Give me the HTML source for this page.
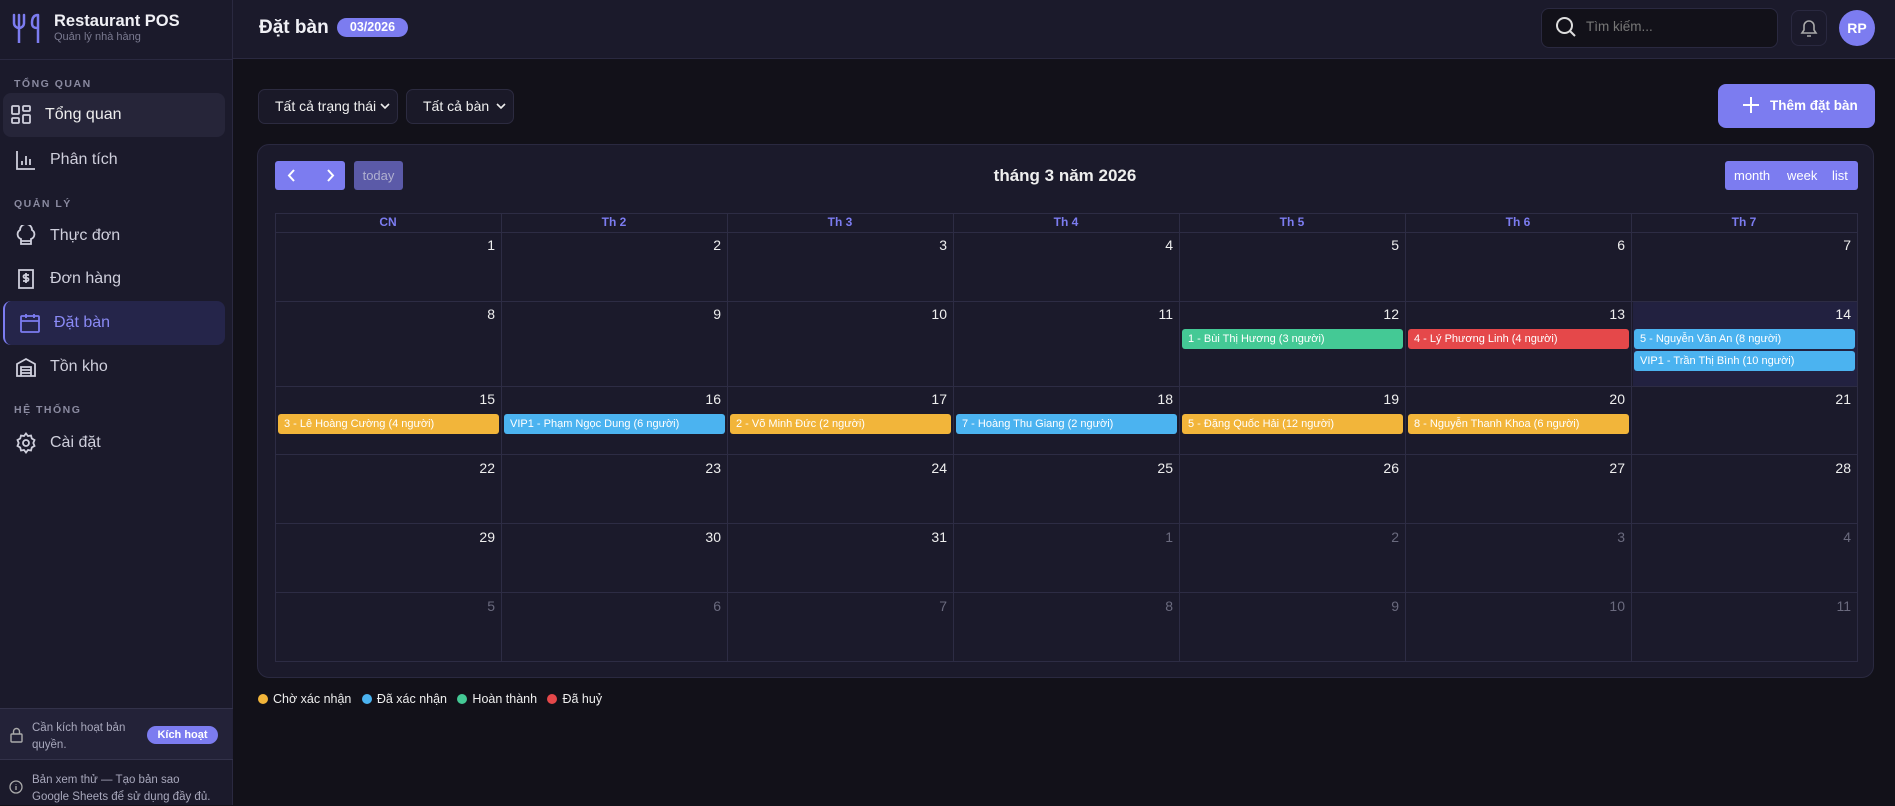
<!DOCTYPE html>
<html><head><meta charset="utf-8"><style>
*{box-sizing:border-box;margin:0;padding:0}
body{width:1895px;height:805px;overflow:hidden;background:#121119;font-family:"Liberation Sans","Noto Sans CJK SC",sans-serif;color:#e8e8f0;position:relative}
.a{position:absolute}
.side{left:0;top:0;width:233px;height:805px;background:#1b1a2b;border-right:1px solid #2a2940}
.nav{left:8px;width:217px;height:44px;border-radius:8px;display:flex;align-items:center;padding-left:42px;font-size:16px;color:#cfcfdc}
.nav svg{position:absolute;left:7px;top:11px}
.lbl{left:14px;font-size:10.5px;letter-spacing:1.5px;color:#8a8aa0;font-weight:bold}
.hdr{left:233px;top:0;width:1662px;height:59px;background:#1b1a2b;border-bottom:1px solid #2a2940}
.sel{top:89px;height:35px;border:1px solid #2c2b40;border-radius:7px;background:#1a1928;font-size:14px;color:#eee;padding:0 0 0 16px;line-height:33px}
.card{left:257px;top:144px;width:1617px;height:534px;background:#1b1a2b;border:1px solid #2a2940;border-radius:12px}
.col{top:213px;height:448px;width:1px;background:#2d2c44}
.row{left:275px;width:1583px;height:1px;background:#2d2c44}
.dh{top:213px;height:19px;width:226px;text-align:center;font-size:12px;font-weight:bold;color:#7c7cf0;line-height:19px}
.dn{width:226px;text-align:right;padding-right:6px;font-size:14px;color:#eee}
.dn.o{color:#6a6a7e}
.ev{height:20px;border-radius:3px;font-size:11px;color:#fff;line-height:20px;padding-left:6px;white-space:nowrap;overflow:hidden}
.y{background:#f2b53a}.b{background:#4bb3f0}.g{background:#44c995}.r{background:#e5484a}
.dot{display:inline-block;width:10px;height:10px;border-radius:50%;margin-right:5px;vertical-align:-1px}
</style></head><body>
<div class="a side"></div>
<svg class="a" style="left:12px;top:13px" width="30" height="30" viewBox="0 0 30 30" fill="none" stroke="#7c7cf0" stroke-width="2.5" stroke-linecap="round"><path d="M2 2v8a5 5 0 0 0 10 0V2M7 2v28M26 2c-5 0-6 4-6 8s2 5 6 5M26 2v28"/></svg>
<div class="a" style="left:54px;top:12px;font-size:16.5px;font-weight:bold;color:#f0f0f5">Restaurant POS</div>
<div class="a" style="left:54px;top:31px;font-size:11px;color:#7a7a90">Quản lý nhà hàng</div>
<div class="a" style="left:0;top:59px;width:233px;height:1px;background:#2a2940"></div>
<div class="a lbl" style="top:78px">TỔNG QUAN</div>
<div class="a nav" style="top:93px;background:#262539;left:3px;width:222px;color:#eee"><svg width="22" height="22" viewBox="0 0 22 22" fill="none" stroke="#cfcfdc" stroke-width="1.8"><rect x="2" y="2" width="7" height="8" rx="1"/><rect x="13" y="2" width="7" height="5" rx="1"/><rect x="2" y="14" width="7" height="5" rx="1"/><rect x="13" y="11" width="7" height="8" rx="1"/></svg>Tổng quan</div>
<div class="a nav" style="top:138px"><svg width="22" height="22" viewBox="0 0 22 22" fill="none" stroke="#cfcfdc" stroke-width="1.8"><path d="M2 2v18h18M7 16v-4M11 16V7M15 16v-6"/></svg>Phân tích</div>
<div class="a lbl" style="top:198px">QUẢN LÝ</div>
<div class="a nav" style="top:214px"><svg width="22" height="22" viewBox="0 0 22 22" fill="none" stroke="#cfcfdc" stroke-width="1.8"><path d="M6 14a5 5 0 0 1-1-9 6 6 0 0 1 12 0 5 5 0 0 1-1 9v5H6zM6 16h10"/></svg>Thực đơn</div>
<div class="a nav" style="top:257px"><svg width="22" height="22" viewBox="0 0 22 22" fill="none" stroke="#cfcfdc" stroke-width="1.8"><path d="M4 2h14v18H4zM14 7h-4a1.5 1.5 0 0 0 0 3h2a1.5 1.5 0 0 1 0 3H8M11 5v10"/></svg>Đơn hàng</div>
<div class="a nav" style="top:301px;background:#25254a;left:3px;width:222px;border-left:2px solid #7c7cf0;color:#8a8af5;padding-left:49px"><svg style="left:14px" width="22" height="22" viewBox="0 0 22 22" fill="none" stroke="#7c7cf0" stroke-width="1.8"><rect x="2" y="4" width="18" height="16" rx="1"/><path d="M2 9h18M7 2v4M15 2v4"/></svg>Đặt bàn</div>
<div class="a nav" style="top:345px"><svg width="22" height="22" viewBox="0 0 22 22" fill="none" stroke="#cfcfdc" stroke-width="1.8"><path d="M2 20V8l9-5 9 5v12zM6 20v-9h10v9M6 14h10M6 17h10"/></svg>Tồn kho</div>
<div class="a lbl" style="top:404px">HỆ THỐNG</div>
<div class="a nav" style="top:421px"><svg width="22" height="22" viewBox="0 0 22 22" fill="none" stroke="#cfcfdc" stroke-width="1.8"><circle cx="11" cy="11" r="3"/><path d="M11 1.5l2 2.5 3-.5.8 3 2.7 1.5-1.2 3 1.2 3-2.7 1.5-.8 3-3-.5-2 2.5-2-2.5-3 .5-.8-3-2.7-1.5 1.2-3-1.2-3 2.7-1.5.8-3 3 .5z"/></svg>Cài đặt</div>
<div class="a" style="left:0;top:708px;width:233px;height:52px;background:#232238;border-top:1px solid #33324a;border-bottom:1px solid #33324a"></div>
<svg class="a" style="left:10px;top:727px" width="13" height="16" viewBox="0 0 13 16" fill="none" stroke="#aaa" stroke-width="1.4"><rect x="1" y="7" width="11" height="8" rx="1"/><path d="M3.5 7V4.5a3 3 0 0 1 6 0V7"/></svg>
<div class="a" style="left:32px;top:720px;font-size:11.5px;line-height:17px;color:#a8a8bc">Cần kích hoạt bản<br>quyền.</div>
<div class="a" style="left:147px;top:726px;width:71px;height:18px;border-radius:9px;background:#7c7cf0;font-size:11px;font-weight:bold;color:#fff;text-align:center;line-height:18px">Kích hoạt</div>
<svg class="a" style="left:9px;top:780px" width="14" height="14" viewBox="0 0 14 14" fill="none" stroke="#aaa" stroke-width="1.3"><circle cx="7" cy="7" r="6"/><path d="M7 6v4M7 4v.5"/></svg>
<div class="a" style="left:32px;top:772px;font-size:11.5px;line-height:17px;color:#a8a8bc">Bản xem thử — Tạo bản sao<br>Google Sheets để sử dụng đầy đủ.</div>

<div class="a hdr"></div>
<div class="a" style="left:259px;top:17px;font-size:19px;font-weight:bold;color:#f0f0f5">Đặt bàn</div>
<div class="a" style="left:337px;top:18px;width:71px;height:19px;border-radius:10px;background:#7c7cf0;font-size:12.5px;font-weight:bold;color:#fff;text-align:center;line-height:19px">03/2026</div>
<div class="a" style="left:1541px;top:8px;width:237px;height:40px;border-radius:8px;background:#121119;border:1px solid #2a2940"></div>
<svg class="a" style="left:1555px;top:16px" width="22" height="22" viewBox="0 0 22 22" fill="none" stroke="#ddd" stroke-width="2"><circle cx="9.5" cy="9.5" r="7.5"/><path d="M15 15l5 5"/></svg>
<div class="a" style="left:1586px;top:19px;font-size:13.5px;color:#777">Tìm kiếm...</div>
<div class="a" style="left:1791px;top:10px;width:36px;height:36px;border-radius:8px;border:1px solid #2a2940"></div>
<svg class="a" style="left:1798px;top:17px" width="22" height="22" viewBox="0 0 22 22" fill="none" stroke="#aaa" stroke-width="1.6"><path d="M4 16h14l-2-3V9a5 5 0 0 0-10 0v4zM9 19h4"/></svg>
<div class="a" style="left:1839px;top:10px;width:36px;height:36px;border-radius:50%;background:#7c7cf0;font-size:14px;font-weight:bold;color:#fff;text-align:center;line-height:36px">RP</div>

<div class="a sel" style="left:258px;width:140px">Tất cả trạng thái<svg style="position:absolute;right:7px;top:13px" width="10" height="7" viewBox="0 0 10 7" fill="none" stroke="#eee" stroke-width="1.6"><path d="M1 1l4 4 4-4"/></svg></div>
<div class="a sel" style="left:406px;width:108px">Tất cả bàn<svg style="position:absolute;right:7px;top:13px" width="10" height="7" viewBox="0 0 10 7" fill="none" stroke="#eee" stroke-width="1.6"><path d="M1 1l4 4 4-4"/></svg></div>
<div class="a" style="left:1718px;top:84px;width:157px;height:44px;border-radius:8px;background:#7c7cf0"></div>
<svg class="a" style="left:1742px;top:96px" width="18" height="18" viewBox="0 0 18 18" stroke="#fff" stroke-width="2"><path d="M9 1v16M1 9h16"/></svg>
<div class="a" style="left:1770px;top:98px;font-size:13.5px;font-weight:bold;color:#fff">Thêm đặt bàn</div>

<div class="a card"></div>
<div class="a" style="left:275px;top:161px;width:70px;height:29px;border-radius:3px;background:#7c7cf0"></div>
<svg class="a" style="left:286px;top:168px" width="50" height="15" viewBox="0 0 50 15" fill="none" stroke="#fff" stroke-width="2"><path d="M8 2l-5 5.5 5 5.5M42 2l5 5.5-5 5.5"/></svg>
<div class="a" style="left:354px;top:161px;width:49px;height:29px;border-radius:3px;background:#5b5aa8;font-size:13px;color:#b0b0d0;text-align:center;line-height:29px">today</div>
<div class="a" style="left:0;width:2130px;top:166px;text-align:center;font-size:17px;font-weight:bold;color:#eee">tháng 3 năm 2026</div>
<div class="a" style="left:1725px;top:161px;width:133px;height:29px;border-radius:3px;background:#7c7cf0;font-size:13px;color:#fff;line-height:29px"><span style="position:absolute;left:9px">month</span><span style="position:absolute;left:62px">week</span><span style="position:absolute;left:107px">list</span></div>

<div class="a" style="left:1633px;top:301px;width:224px;height:85px;background:#222140"></div>
<div class="a row" style="top:213px"></div><div class="a row" style="top:232px"></div><div class="a row" style="top:301px"></div><div class="a row" style="top:386px"></div><div class="a row" style="top:454px"></div><div class="a row" style="top:523px"></div><div class="a row" style="top:592px"></div><div class="a row" style="top:661px"></div>
<div class="a col" style="left:275px"></div><div class="a col" style="left:501px"></div><div class="a col" style="left:727px"></div><div class="a col" style="left:953px"></div><div class="a col" style="left:1179px"></div><div class="a col" style="left:1405px"></div><div class="a col" style="left:1631px"></div><div class="a col" style="left:1857px"></div>
<div class="a dh" style="left:275px">CN</div><div class="a dh" style="left:501px">Th 2</div><div class="a dh" style="left:727px">Th 3</div><div class="a dh" style="left:953px">Th 4</div><div class="a dh" style="left:1179px">Th 5</div><div class="a dh" style="left:1405px">Th 6</div><div class="a dh" style="left:1631px">Th 7</div>

<div class="a" style="top:237px;left:275px;display:flex"><div class="dn">1</div><div class="dn">2</div><div class="dn">3</div><div class="dn">4</div><div class="dn">5</div><div class="dn">6</div><div class="dn">7</div></div>
<div class="a" style="top:306px;left:275px;display:flex"><div class="dn">8</div><div class="dn">9</div><div class="dn">10</div><div class="dn">11</div><div class="dn">12</div><div class="dn">13</div><div class="dn">14</div></div>
<div class="a" style="top:391px;left:275px;display:flex"><div class="dn">15</div><div class="dn">16</div><div class="dn">17</div><div class="dn">18</div><div class="dn">19</div><div class="dn">20</div><div class="dn">21</div></div>
<div class="a" style="top:460px;left:275px;display:flex"><div class="dn">22</div><div class="dn">23</div><div class="dn">24</div><div class="dn">25</div><div class="dn">26</div><div class="dn">27</div><div class="dn">28</div></div>
<div class="a" style="top:529px;left:275px;display:flex"><div class="dn">29</div><div class="dn">30</div><div class="dn">31</div><div class="dn o">1</div><div class="dn o">2</div><div class="dn o">3</div><div class="dn o">4</div></div>
<div class="a" style="top:598px;left:275px;display:flex"><div class="dn o">5</div><div class="dn o">6</div><div class="dn o">7</div><div class="dn o">8</div><div class="dn o">9</div><div class="dn o">10</div><div class="dn o">11</div></div>

<div class="a ev g" style="left:1182px;top:329px;width:221px">1 - Bùi Thị Hương (3 người)</div>
<div class="a ev r" style="left:1408px;top:329px;width:221px">4 - Lý Phương Linh (4 người)</div>
<div class="a ev b" style="left:1634px;top:329px;width:221px">5 - Nguyễn Văn An (8 người)</div>
<div class="a ev b" style="left:1634px;top:351px;width:221px">VIP1 - Trần Thị Bình (10 người)</div>
<div class="a ev y" style="left:278px;top:414px;width:221px">3 - Lê Hoàng Cường (4 người)</div>
<div class="a ev b" style="left:504px;top:414px;width:221px">VIP1 - Phạm Ngọc Dung (6 người)</div>
<div class="a ev y" style="left:730px;top:414px;width:221px">2 - Võ Minh Đức (2 người)</div>
<div class="a ev b" style="left:956px;top:414px;width:221px">7 - Hoàng Thu Giang (2 người)</div>
<div class="a ev y" style="left:1182px;top:414px;width:221px">5 - Đặng Quốc Hải (12 người)</div>
<div class="a ev y" style="left:1408px;top:414px;width:221px">8 - Nguyễn Thanh Khoa (6 người)</div>

<div class="a" style="left:258px;top:692px;font-size:12.5px;color:#eee;white-space:nowrap"><span class="dot y"></span>Chờ xác nhận&nbsp;&nbsp;&nbsp;<span class="dot b"></span>Đã xác nhận&nbsp;&nbsp;&nbsp;<span class="dot g"></span>Hoàn thành&nbsp;&nbsp;&nbsp;<span class="dot r"></span>Đã huỷ</div>
</body></html>
